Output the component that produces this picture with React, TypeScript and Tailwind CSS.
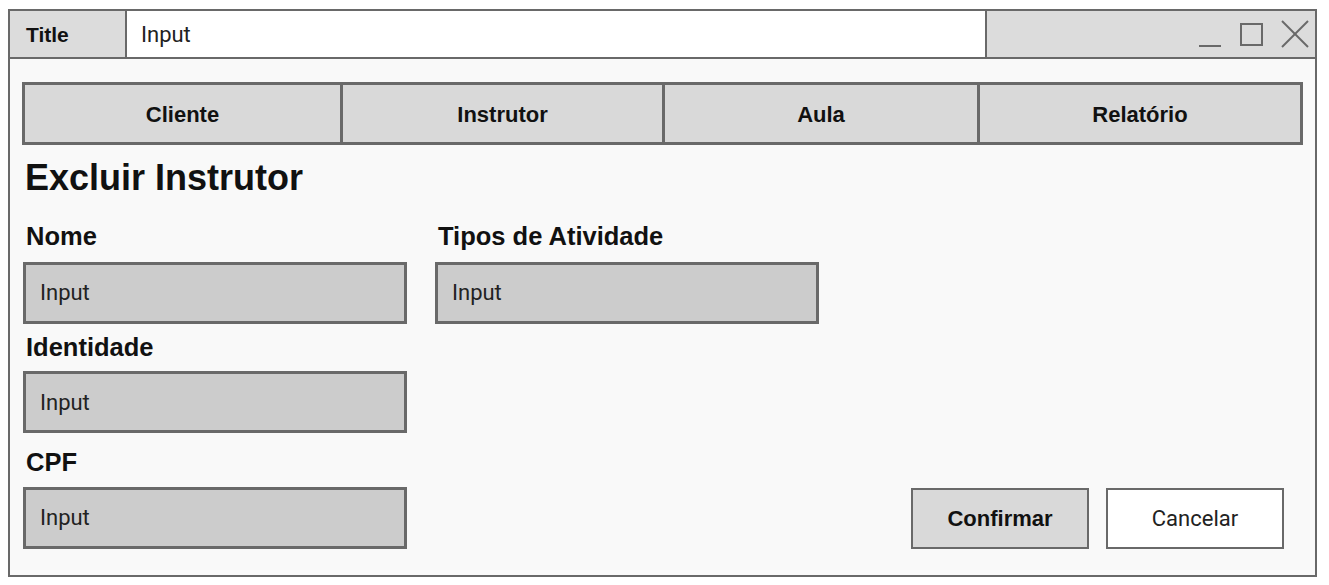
import React from 'react';

const bold = "font-['Liberation_Sans',Arial,sans-serif] font-bold";
const regular = "font-['Roboto','Liberation_Sans',sans-serif] font-normal";

const tabs = [
  { label: 'Cliente', cls: 'w-[315px]' },
  { label: 'Instrutor', cls: 'w-[322px] border-l-[3px]' },
  { label: 'Aula', cls: 'w-[315px] border-l-[3px]' },
  { label: 'Relatório', cls: 'flex-1 border-l-[3px]' },
];

const Field: React.FC<{ label: string; className?: string; inputClass?: string }> = ({ label, className = '', inputClass = '' }) => (
  <div className={className}>
    <div className={`${bold} text-[25.5px] leading-none text-[#111] ml-[3px]`}>{label}</div>
    <div className={`h-[62px] w-[384px] border-[3px] border-[#696969] bg-[#cccccc] flex items-center pl-[14px] ${inputClass}`}>
      <span className={`${regular} text-[22px] text-[#222]`}>Input</span>
    </div>
  </div>
);

const WindowControls = () => (
  <svg width="110" height="46" viewBox="0 0 110 46" fill="none" stroke="#696969" strokeWidth="2">
    <line x1="0" y1="35" x2="22" y2="35" />
    <rect x="42" y="13" width="21" height="21" />
    <line x1="83" y1="10" x2="109" y2="36" />
    <line x1="109" y1="10" x2="83" y2="36" />
  </svg>
);

export default function App() {
  return (
    <div className="bg-white w-[1329px] h-[585px] pt-[9px] pl-[8px]">
      <div className="w-[1309px] h-[568px] border-2 border-[#696969] bg-[#f9f9f9] flex flex-col">
        {/* title bar */}
        <div className="h-[48px] flex border-b-2 border-[#696969] shrink-0">
          <div className="w-[117px] bg-[#dcdcdc] border-r-2 border-[#696969] flex items-center pl-[16px] pt-[1px]">
            <span className={`${bold} text-[21px] text-[#111]`}>Title</span>
          </div>
          <div className="w-[860px] bg-white border-r-2 border-[#696969] flex items-center pl-[14px] pt-[1px]">
            <span className={`${regular} text-[22px] text-[#222]`}>Input</span>
          </div>
          <div className="flex-1 bg-[#dcdcdc] flex justify-end pr-[6px]">
            <WindowControls />
          </div>
        </div>

        <div className="flex-1 px-[12px] pt-[23px] flex flex-col">
          {/* tabs */}
          <div className="h-[63px] flex border-[3px] border-[#696969] bg-[#d9d9d9]">
            {tabs.map((t) => (
              <div key={t.label} className={`${t.cls} border-[#696969] flex items-center justify-center pt-[2px]`}>
                <span className={`${bold} text-[22px] text-[#111]`}>{t.label}</span>
              </div>
            ))}
          </div>

          <h1 className={`${bold} text-[36px] leading-none text-[#111] mt-[15px] ml-[3px]`}>Excluir Instrutor</h1>

          <div className="flex mt-[28px] ml-[1px]">
            <div className="flex flex-col">
              <Field label="Nome" inputClass="mt-[12px]" />
              <Field label="Identidade" className="mt-[11px]" inputClass="mt-[11px]" />
              <Field label="CPF" className="mt-[17px]" inputClass="mt-[11px]" />
            </div>
            <div className="ml-[28px]">
              <Field label="Tipos de Atividade" inputClass="mt-[12px]" />
            </div>
            <div className="flex-1 flex justify-end items-end gap-[17px] mr-[19px]">
              <button className={`${bold} text-[22px] text-[#111] w-[178px] h-[61px] border-2 border-[#696969] bg-[#d9d9d9]`}>
                Confirmar
              </button>
              <button className={`${regular} text-[22px] text-[#222] w-[178px] h-[61px] border-2 border-[#696969] bg-white`}>
                Cancelar
              </button>
            </div>
          </div>
        </div>
      </div>
    </div>
  );
}
